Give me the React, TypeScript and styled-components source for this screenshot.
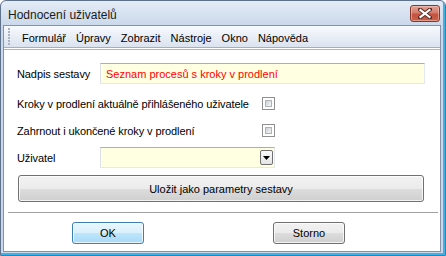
import styled, { createGlobalStyle } from "styled-components";

const GlobalStyle = createGlobalStyle`
  html, body {
    margin: 0;
    padding: 0;
    background: #ffffff;
  }
  body {
    font-family: "Liberation Sans", Arial, sans-serif;
    font-size: 11px;
    color: #000;
  }
`;

const Window = styled.div`
  width: 446px;
  height: 256px;
  box-sizing: border-box;
  display: flex;
  flex-direction: column;
  border: 1px solid #5f728c;
  border-radius: 6px 6px 0 0;
  background: linear-gradient(#e4ecf6 0px, #cbd9ec 24px, #c9d8ec 100%);
  box-shadow: inset -2px -2px 0 #3cb2e8;
  overflow: hidden;
`;

const TitleBar = styled.div`
  height: 24px;
  flex: none;
  display: flex;
  align-items: flex-start;
  padding: 0 5px 0 7px;
`;

const Title = styled.div`
  font-size: 12px;
  line-height: 14px;
  margin-top: 7px;
  color: #1a1a1a;
`;

const CloseButton = styled.div`
  margin-left: auto;
  margin-top: 4px;
  width: 30px;
  height: 17px;
  box-sizing: border-box;
  border: 1px solid #86372b;
  border-radius: 3px;
  background: linear-gradient(#e2a396 0%, #d47b6a 45%, #c4533f 55%, #c8604b 100%);
  box-shadow: inset 0 0 0 1px rgba(255, 210, 200, 0.5);
  display: flex;
  align-items: center;
  justify-content: center;
`;

const Body = styled.div`
  flex: 1;
  display: flex;
  padding: 0 4px 3px 2px;
`;

const Client = styled.div`
  flex: 1;
  display: flex;
  flex-direction: column;
  border: 1px solid #8392a8;
  background: #ffffff;
`;

const MenuBar = styled.div`
  height: 21px;
  flex: none;
  display: flex;
  align-items: center;
  gap: 10px;
  padding-left: 4px;
  background: linear-gradient(#f8fafd, #e9eef6 50%, #dbe3ef);
  border-bottom: 1px solid #a4b0c2;
`;

const Grip = styled.div`
  width: 3px;
  height: 17px;
  margin-right: 1px;
  background-image: linear-gradient(#a9b3c2 0 2px, transparent 2px 3px);
  background-size: 2px 3px;
  background-repeat: repeat-y;
`;

const MenuItem = styled.span`
  font-size: 11px;
  padding-top: 2px;
  color: #000;
`;

const Content = styled.div`
  flex: 1;
  display: flex;
  flex-direction: column;
  border-top: 1px solid #b4b4b4;
  margin-top: 1px;
`;

const Form = styled.div`
  display: flex;
  flex-direction: column;
  gap: 6px;
  padding: 13px 0 0 13px;
`;

const Row = styled.div<{ $extra?: number }>`
  height: 21px;
  display: flex;
  align-items: center;
  margin-bottom: ${(p) => p.$extra || 0}px;
`;

const Label = styled.div<{ $w: number }>`
  width: ${(p) => p.$w}px;
  flex: none;
  white-space: nowrap;
  letter-spacing: -0.1px;
`;

const TextInput = styled.div`
  width: 325px;
  height: 21px;
  box-sizing: border-box;
  border: 1px solid #e3e9ef;
  border-top-color: #abadb3;
  border-left-color: #dbdfe6;
  background: #ffffe1;
  color: #ff0000;
  padding-left: 5px;
  display: flex;
  align-items: center;
`;

const Combo = styled.div`
  width: 175px;
  height: 21px;
  box-sizing: border-box;
  border: 1px solid #e3e9ef;
  border-top-color: #abadb3;
  border-left-color: #dbdfe6;
  background: #ffffe1;
  display: flex;
  justify-content: flex-end;
  align-items: center;
  padding-right: 1px;
`;

const DropButton = styled.div`
  width: 13px;
  height: 15px;
  box-sizing: border-box;
  border: 1px solid #6f6f6f;
  border-radius: 2px;
  background: linear-gradient(#fbfbfb, #e4e4e4);
  display: flex;
  align-items: center;
  justify-content: center;
`;

const Check = styled.div`
  width: 13px;
  height: 13px;
  box-sizing: border-box;
  border: 1px solid #8e8f8f;
  background: #fff;
  padding: 2px;
  &::after {
    content: "";
    display: block;
    width: 100%;
    height: 100%;
    box-sizing: border-box;
    border: 1px solid #aeb3b9;
    background: linear-gradient(135deg, #cbcfd5, #f6f6f6);
  }
`;

const Button = styled.div<{ $default?: boolean }>`
  box-sizing: border-box;
  display: flex;
  align-items: center;
  justify-content: center;
  border: 1px solid ${(p) => (p.$default ? "#3c7fb1" : "#707070")};
  border-radius: 3px;
  background: ${(p) =>
    p.$default
      ? "linear-gradient(#eaf6fd 0%, #d9f0fc 50%, #bee6fd 50%, #a7d9f5 100%)"
      : "linear-gradient(#f2f2f2 0%, #ebebeb 50%, #dddddd 50%, #cfcfcf 100%)"};
  box-shadow: inset 0 0 0 1px rgba(255, 255, 255, 0.75);
  color: #000;
`;

const WideButton = styled(Button)`
  width: 406px;
  height: 27px;
  margin: 1px 0 0 1px;
`;

const Separator = styled.div`
  height: 1px;
  background: #a0a0a0;
  margin: 10px 2px 0 4px;
`;

const Footer = styled.div`
  display: flex;
  padding: 9px 0 0 68px;
  gap: 129px;
`;

const DialogButton = styled(Button)`
  width: 72px;
  height: 22px;
`;

export default function App() {
  const menu = ["Formulář", "Úpravy", "Zobrazit", "Nástroje", "Okno", "Nápověda"];
  return (
    <>
      <GlobalStyle />
      <Window>
        <TitleBar>
          <Title>Hodnocení uživatelů</Title>
          <CloseButton>
            <svg width="14" height="11" viewBox="0 0 14 11">
              <path
                d="M2 1.5 L12 9.5 M12 1.5 L2 9.5"
                stroke="#5a2a24"
                strokeWidth="4"
                strokeLinecap="square"
              />
              <path
                d="M2.5 2 L11.5 9 M11.5 2 L2.5 9"
                stroke="#ffffff"
                strokeWidth="2.2"
                strokeLinecap="square"
              />
            </svg>
          </CloseButton>
        </TitleBar>
        <Body>
          <Client>
            <MenuBar>
              <Grip />
              {menu.map((m) => (
                <MenuItem key={m}>{m}</MenuItem>
              ))}
            </MenuBar>
            <Content>
              <Form>
                <Row $extra={3}>
                  <Label $w={83}>Nadpis sestavy</Label>
                  <TextInput>Seznam procesů s kroky v prodlení</TextInput>
                </Row>
                <Row>
                  <Label $w={245}>Kroky v prodlení aktuálně přihlášeného uživatele</Label>
                  <Check />
                </Row>
                <Row>
                  <Label $w={245}>Zahrnout i ukončené kroky v prodlení</Label>
                  <Check />
                </Row>
                <Row>
                  <Label $w={83}>Uživatel</Label>
                  <Combo>
                    <DropButton>
                      <svg width="7" height="4" viewBox="0 0 7 4">
                        <path d="M0 0 H7 L3.5 4 Z" fill="#000" />
                      </svg>
                    </DropButton>
                  </Combo>
                </Row>
                <WideButton>Uložit jako parametry sestavy</WideButton>
              </Form>
              <Separator />
              <Footer>
                <DialogButton $default>OK</DialogButton>
                <DialogButton>Storno</DialogButton>
              </Footer>
            </Content>
          </Client>
        </Body>
      </Window>
    </>
  );
}
